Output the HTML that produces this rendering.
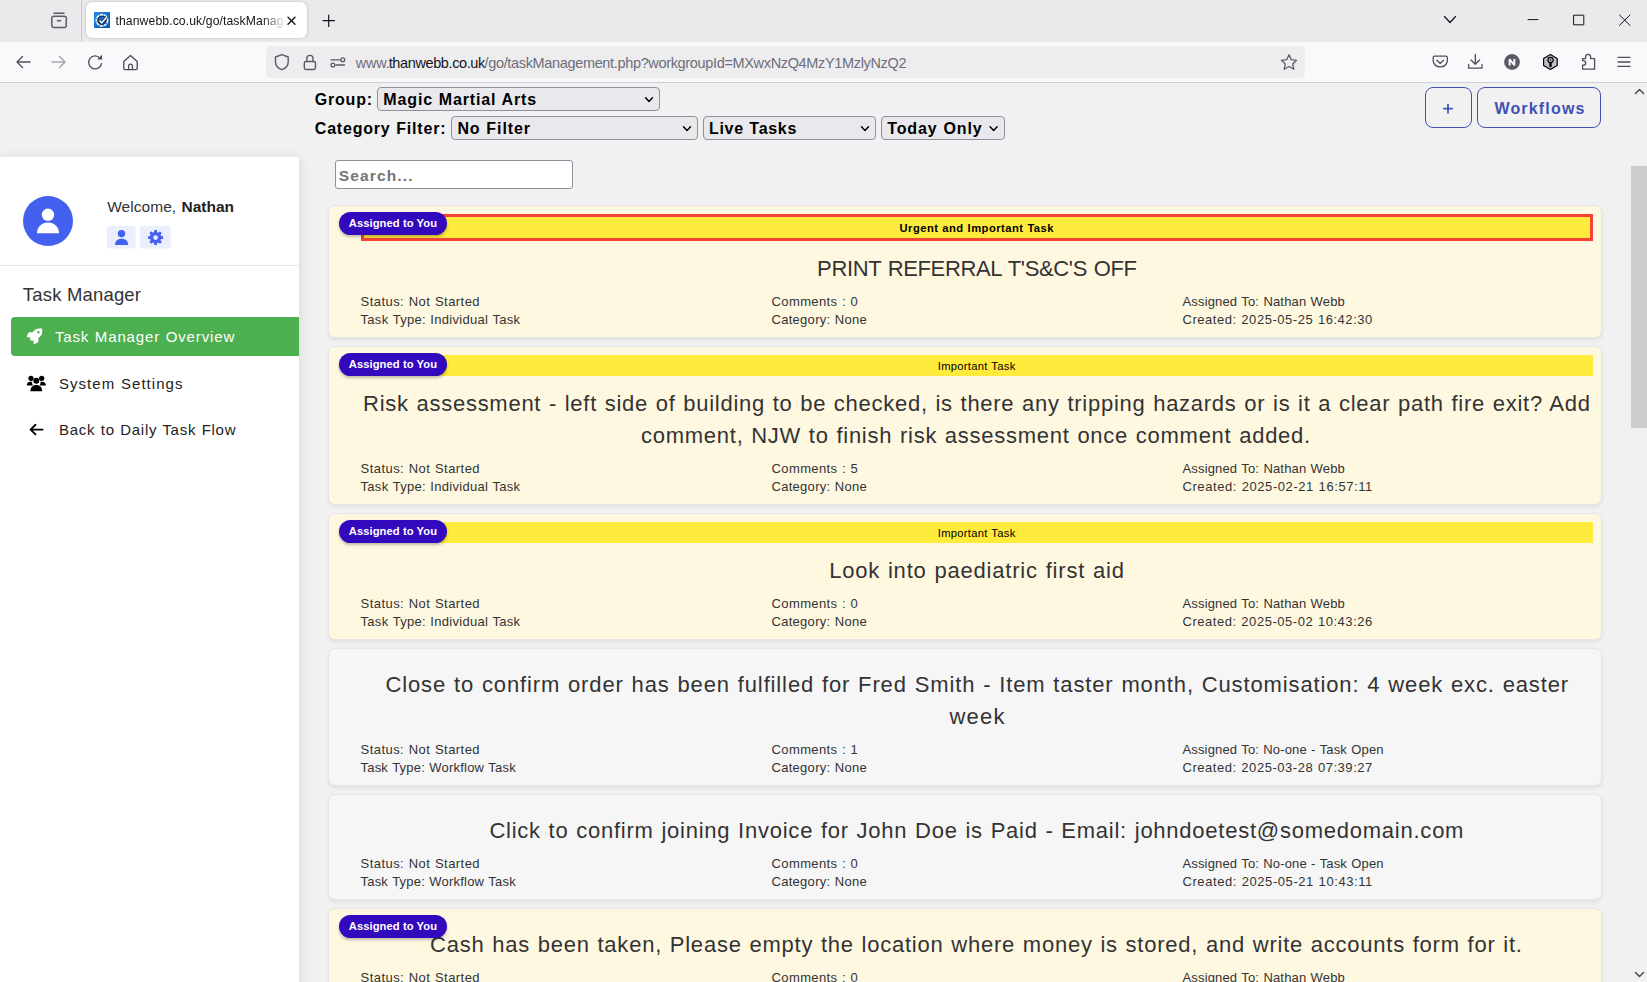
<!DOCTYPE html>
<html><head><meta charset="utf-8">
<style>
*{box-sizing:border-box;margin:0;padding:0}
html,body{width:1647px;height:982px;overflow:hidden;background:#f1f1f1;font-family:"Liberation Sans",sans-serif;position:relative}
.a{position:absolute;white-space:nowrap}
.r{position:absolute}
svg{position:absolute;overflow:visible}
.card{position:absolute;left:328px;width:1274px;border-radius:7px;box-shadow:0 2px 4px rgba(0,0,0,.07);border:1px solid #e5e5e5}
.badge{position:absolute;left:339px;width:108px;height:23px;border-radius:11.5px;background:#3309bd;box-shadow:0 2px 3px rgba(0,0,0,.25);z-index:2}
.banner{position:absolute;left:361px;width:1232px;background:#ffeb3b}
.sel{position:absolute;background:#e9e9ed;border:1px solid #8f8f9d;border-radius:4px}
</style></head><body>
<!-- browser chrome -->
<div class="r" style="left:0;top:0;width:1647px;height:42px;background:#eaeaed"></div>
<div class="r" style="left:81px;top:0;width:1px;height:42px;background:#c9c9cf"></div>
<div class="r" style="left:86px;top:2px;width:221px;height:36px;background:#fff;border-radius:6px;box-shadow:0 0 3px rgba(0,0,0,.22)"></div>
<div class="r" style="left:0;top:42px;width:1647px;height:40px;background:#f9f9fb"></div>
<div class="r" style="left:0;top:82px;width:1647px;height:1px;background:#d0d0d7"></div>
<div class="r" style="left:266px;top:46px;width:1039px;height:32px;background:#ededf0;border-radius:5px"></div>

<!-- tab container icon -->
<svg style="left:0;top:0" width="1647" height="83" viewBox="0 0 1647 83" fill="none" stroke="#5b5b66" stroke-width="1.5" stroke-linecap="round" stroke-linejoin="round">
  <path d="M54 13.2 H64"/>
  <rect x="51.8" y="16.2" width="14.5" height="11.3" rx="2"/>
  <path d="M57.5 20.7 H60.5"/>
  <!-- tab close -->
  <path d="M288 17.2 L295 24.2 M295 17.2 L288 24.2" stroke="#15141a" stroke-width="1.4"/>
  <!-- new tab plus -->
  <path d="M328.7 15 V26.4 M323 20.7 H334.5" stroke="#15141a" stroke-width="1.2"/>
  <!-- tab list chevron -->
  <path d="M1444.5 16.5 L1450 22.5 L1455.5 16.5" stroke="#15141a" stroke-width="1.2"/>
  <!-- window controls -->
  <path d="M1528 19.6 H1538" stroke="#15141a" stroke-width="1"/>
  <rect x="1574" y="15.2" width="9.8" height="9.6" stroke="#15141a" stroke-width="1"/>
  <path d="M1619.5 15 L1630 25.4 M1630 15 L1619.5 25.4" stroke="#15141a" stroke-width="1"/>
  <!-- back -->
  <path d="M30 62 H17 M22.5 56.5 L17 62 L22.5 67.5" stroke="#4f4f5a" stroke-width="1.35"/>
  <!-- forward -->
  <path d="M52 62 H65 M59.5 56.5 L65 62 L59.5 67.5" stroke="#a8a8ad" stroke-width="1.5"/>
  <!-- reload -->
  <path d="M100.2 58.3 A6.5 6.5 0 1 0 101.5 63.6" stroke="#4f4f5a" stroke-width="1.35"/>
  <path d="M97.2 59.4 L102 54.8 L102.2 59.6 Z" fill="#4f4f5a" stroke="none"/>
  <!-- home -->
  <path d="M123.8 61.5 L130.5 55.6 L137.2 61.5 V68.6 A1 1 0 0 1 136.2 69.6 H124.8 A1 1 0 0 1 123.8 68.6 Z" stroke="#4f4f5a" stroke-width="1.35"/>
  <path d="M128.6 69.6 V66 A1.9 1.9 0 0 1 132.4 66 V69.6" stroke="#4f4f5a" stroke-width="1.35"/>
  <!-- shield -->
  <path d="M281.8 54.7 L275.5 57 V62 C275.5 66 278.5 68.5 281.8 69.6 C285.1 68.5 288.2 66 288.2 62 V57 Z" stroke="#5b5b66" stroke-width="1.4"/>
  <!-- lock -->
  <rect x="304.3" y="61.5" width="11.2" height="8" rx="1.7" stroke="#5b5b66" stroke-width="1.4"/>
  <path d="M306.8 61.5 V58.5 A3.1 3.1 0 0 1 313 58.5 V61.5" stroke="#5b5b66" stroke-width="1.4"/>
  <!-- tune -->
  <path d="M331 59.8 H340.5 M336 65 H344.5" stroke="#5b5b66" stroke-width="1.3"/>
  <circle cx="342.8" cy="59.8" r="1.9" stroke="#5b5b66" stroke-width="1.3"/>
  <circle cx="332.9" cy="65" r="1.9" stroke="#5b5b66" stroke-width="1.3"/>
  <!-- star -->
  <path d="M1289 54.8 L1291.3 59.7 L1296.6 60.3 L1292.7 63.9 L1293.8 69.2 L1289 66.5 L1284.2 69.2 L1285.3 63.9 L1281.4 60.3 L1286.7 59.7 Z" stroke="#5b5b66" stroke-width="1.3"/>
  <!-- pocket -->
  <path d="M1434.5 56.2 H1446 A1.3 1.3 0 0 1 1447.3 57.5 V61.5 A7.3 7.3 0 0 1 1433.2 61.5 V57.5 A1.3 1.3 0 0 1 1434.5 56.2 Z" stroke="#4f4f5a" stroke-width="1.3"/>
  <path d="M1436.8 60.2 L1440.2 63.5 L1443.6 60.2" stroke="#4f4f5a" stroke-width="1.3"/>
  <!-- download -->
  <path d="M1475.3 54.5 V64 M1471 60 L1475.3 64.3 L1479.6 60 M1468.6 64.5 V68.2 H1482 V64.5" stroke="#4f4f5a" stroke-width="1.3"/>
  <!-- N circle -->
  <circle cx="1512" cy="62" r="7.9" fill="#5b5b66" stroke="none"/>
  <path d="M1508.7 65.6 V58.9 H1510.7 L1513.4 62.8 V58.9 H1515.3 V65.6 H1513.3 L1510.6 61.7 V65.6 Z" fill="#fff" stroke="none"/>
  <!-- hexagon -->
  <path d="M1550.4 54.6 L1557.2 58.4 V65.6 L1550.4 69.4 L1543.6 65.6 V58.4 Z" fill="#bcc0ca" stroke="#000" stroke-width="1.2"/>
  <circle cx="1550.5" cy="60" r="2.6" fill="#bcc0ca" stroke="#000" stroke-width="1.2"/>
  <circle cx="1550.5" cy="60" r="0.8" fill="#000" stroke="none"/>
  <path d="M1550.5 63.8 V66" stroke="#000" stroke-width="2.4"/>
  <!-- puzzle -->
  <path d="M1582.6 58.6 H1585.6 V56.8 A2.5 2.5 0 0 1 1590.6 56.8 V58.6 H1594.6 V69.2 H1582.6 V65.2 A3.2 2.3 0 0 0 1582.6 60.6 Z" stroke="#4f4f5a" stroke-width="1.3"/>
  <!-- hamburger -->
  <path d="M1618 57.3 H1630 M1618 62 H1630 M1618 66.4 H1630" stroke="#4f4f5a" stroke-width="1.3"/>
</svg>
<!-- favicon -->
<svg style="left:94px;top:12px" width="16" height="16" viewBox="0 0 16 16">
  <defs><linearGradient id="fg" x1="0" y1="0" x2="1" y2="1"><stop offset="0" stop-color="#2a8ae6"/><stop offset="1" stop-color="#0a56b0"/></linearGradient></defs>
  <rect width="16" height="16" fill="url(#fg)"/>
  <circle cx="8" cy="8.3" r="5.6" fill="none" stroke="#e8f2fc" stroke-width="1.8" stroke-dasharray="3.2 0.7"/>
  <circle cx="8" cy="8.3" r="3.9" fill="#1c6fcf" stroke="#14325e" stroke-width="1.4"/>
  <path d="M5.6 8.6 L7.7 10.9 L13.2 4.6" fill="none" stroke="#14325e" stroke-width="3"/>
  <path d="M5.6 8.6 L7.7 10.9 L13.2 4.6" fill="none" stroke="#fff" stroke-width="1.5"/>
</svg>

<!-- page -->
<div class="r" style="left:0;top:157px;width:299px;height:835px;background:#fff;box-shadow:2px 0 10px rgba(0,0,0,.09)"></div>
<div class="r" style="left:0;top:265px;width:299px;height:1px;background:#e6e6e6"></div>
<div class="r" style="left:11px;top:317px;width:288px;height:39px;background:#4caf50;border-radius:4px 0 0 4px"></div>
<!-- avatar -->
<svg style="left:0;top:0" width="300" height="460" viewBox="0 0 300 460">
  <circle cx="48" cy="221" r="25" fill="#4361ee"/>
  <circle cx="48" cy="214.8" r="6.2" fill="#fff"/>
  <path d="M37 233.2 C37 226.8 42 222.6 48 222.6 C54 222.6 59 226.8 59 233.2 Z" fill="#fff"/>
  <rect x="107" y="226" width="28.7" height="22.6" rx="3" fill="#ebeefd"/>
  <rect x="140" y="226" width="30.8" height="22.6" rx="3" fill="#ebeefd"/>
  <circle cx="121.5" cy="233.6" r="3.7" fill="#4361ee"/>
  <path d="M115 245 C115 240.8 117.8 238.8 121.6 238.8 C125.4 238.8 128.2 240.8 128.2 245 Z" fill="#4361ee"/>
  <path fill="#4361ee" fill-rule="evenodd" d="M160.99 236.08 L163.08 236.27 L163.08 238.93 L160.99 239.12 L160.49 240.34 L161.83 241.95 L159.95 243.83 L158.34 242.49 L157.12 242.99 L156.93 245.08 L154.27 245.08 L154.08 242.99 L152.86 242.49 L151.25 243.83 L149.37 241.95 L150.71 240.34 L150.21 239.12 L148.12 238.93 L148.12 236.27 L150.21 236.08 L150.71 234.86 L149.37 233.25 L151.25 231.37 L152.86 232.71 L154.08 232.21 L154.27 230.12 L156.93 230.12 L157.12 232.21 L158.34 232.71 L159.95 231.37 L161.83 233.25 L160.49 234.86 Z M158.00 237.60 A2.4 2.4 0 1 0 153.20 237.60 A2.4 2.4 0 1 0 158.00 237.60 Z"/>
  <!-- rocket -->
  <g transform="translate(26.7 328.4) scale(0.0305)" fill="#fff">
    <path d="M505.12 19.09c-1.19-5.53-6.66-11-12.21-12.19C460.72 0 435.51 0 410.41 0 307.18 0 245.27 55.2 199.05 128H94.84c-16.35.02-35.56 11.88-42.89 26.48L2.52 253.3A28.4 28.4 0 0 0 0 264a24.01 24.01 0 0 0 24.01 24h103.81l-22.47 22.47c-11.37 11.36-13 32.26 0 45.25l50.9 50.91c11.16 11.19 32.16 13.16 45.28 0l22.47-22.47V488a24.01 24.01 0 0 0 24.01 24 28.56 28.56 0 0 0 10.71-2.52l98.73-49.39c14.63-7.3 26.51-26.5 26.51-42.86V312.8c72.6-46.31 128.03-108.41 128.03-211.09.1-25.2.1-50.41-6.86-82.62zM384.04 168a40 40 0 1 1 40.01-40 40.02 40.02 0 0 1-40.01 40z" fill-rule="evenodd"/>
    
  </g>
  <!-- users -->
  <g transform="translate(26.7 375.7)" fill="#000">
    <circle cx="4.3" cy="2.6" r="2.6"/><circle cx="15" cy="2.6" r="2.6"/>
    <circle cx="9.6" cy="5" r="3"/>
    <path d="M0 9.8 C0 7.4 1.6 6 3.6 6 L5.6 6 C5 7 5.6 8.5 6.3 9.8 Z"/>
    <path d="M19.2 9.8 C19.2 7.4 17.6 6 15.6 6 L13.6 6 C14.2 7 13.6 8.5 12.9 9.8 Z"/>
    <path d="M3.7 15.5 C3.7 11.8 6 9.3 9.6 9.3 C13.2 9.3 15.5 11.8 15.5 15.5 Z"/>
  </g>
  <!-- arrow left -->
  <path d="M42.6 429.6 H31 M35.5 424.8 L30.6 429.6 L35.5 434.4" fill="none" stroke="#000" stroke-width="1.9" stroke-linecap="round" stroke-linejoin="round"/>
</svg>

<!-- filters -->
<div class="sel" style="left:377px;top:87px;width:283px;height:24px"></div>
<div class="sel" style="left:451px;top:116px;width:247px;height:24px"></div>
<div class="sel" style="left:703px;top:116px;width:173px;height:24px"></div>
<div class="sel" style="left:881px;top:116px;width:124px;height:24px"></div>
<svg style="left:0;top:0" width="1647" height="200" viewBox="0 0 1647 200" fill="none" stroke="#000" stroke-width="1.5" stroke-linecap="round" stroke-linejoin="round">
  <path d="M645.6 97.7 L649 101.4 L652.4 97.7"/>
  <path d="M683.5 126.7 L687 130.4 L690.5 126.7"/>
  <path d="M861.5 126.7 L865 130.4 L868.5 126.7"/>
  <path d="M990.1 126.7 L993.6 130.4 L997.1 126.7"/>
  <path d="M1448 103.9 V113.4 M1443.2 108.65 H1452.8" stroke="#3f51b5" stroke-width="1.7" stroke-linecap="butt"/>
  <!-- scrollbar arrows -->
  <path d="M1635.5 93.5 L1639.5 89.5 L1643.5 93.5" stroke="#505050" stroke-width="1.6"/>
  <path d="M1635.5 972.5 L1639.5 976.5 L1643.5 972.5" stroke="#505050" stroke-width="1.6"/>
</svg>
<div class="r" style="left:1425px;top:87px;width:47px;height:41px;border:1.5px solid #3f51b5;border-radius:8px"></div>
<div class="r" style="left:1477px;top:87px;width:124px;height:41px;border:1.5px solid #3f51b5;border-radius:8px"></div>
<div class="r" style="left:335px;top:160px;width:238px;height:29px;background:#fff;border:1.5px solid #8f8f9d;border-radius:3px"></div>
<!-- scrollbar thumb -->
<div class="r" style="left:1631px;top:166px;width:16px;height:262px;background:#cdcdcd"></div>

<div class="card" style="top:205px;height:133px;background:#fff8e1"></div>
<div class="badge" style="top:212px"></div>
<div class="banner" style="top:214px;height:27px;border:3px solid #f44336"></div>
<div class="card" style="top:346px;height:159px;background:#fff8e1"></div>
<div class="badge" style="top:353px"></div>
<div class="banner" style="top:355px;height:21px"></div>
<div class="card" style="top:513px;height:127px;background:#fff8e1"></div>
<div class="badge" style="top:520px"></div>
<div class="banner" style="top:522px;height:21px"></div>
<div class="card" style="top:648px;height:138px;background:#f6f6f6"></div>
<div class="card" style="top:794px;height:106px;background:#f6f6f6"></div>
<div class="card" style="top:908px;height:130px;background:#fff8e1"></div>
<div class="badge" style="top:915px"></div>
<span class="a" id="tabt" style="left:115.50px;top:14.97px;font-size:12.2px;line-height:12.2px;color:#15141a;letter-spacing:-0.533px;letter-spacing:0.1px;width:170px;padding-bottom:4px;overflow:hidden;-webkit-mask-image:linear-gradient(to right,#000 86%,transparent 100%);mask-image:linear-gradient(to right,#000 86%,transparent 100%)">thanwebb.co.uk/go/taskManage</span>
<span class="a" id="url1" style="left:355.70px;top:55.53px;font-size:14.5px;line-height:14.5px;color:#6e6e78;letter-spacing:-0.219px;">www.</span>
<span class="a" id="url2" style="left:388.70px;top:55.53px;font-size:14.5px;line-height:14.5px;color:#15141a;letter-spacing:-0.383px;">thanwebb.co.uk</span>
<span class="a" id="url3" style="left:484.50px;top:55.53px;font-size:14.5px;line-height:14.5px;color:#6e6e78;letter-spacing:-0.341px;">/go/taskManagement.php?workgroupId=MXwxNzQ4MzY1MzlyNzQ2</span>
<span class="a" id="grp" style="left:314.80px;top:91.86px;font-size:16px;line-height:16px;color:#000;font-weight:700;letter-spacing:0.793px;word-spacing:0.480px;">Group:</span>
<span class="a" id="grpv" style="left:383.30px;top:91.86px;font-size:16px;line-height:16px;color:#000;font-weight:700;letter-spacing:0.860px;word-spacing:0.480px;">Magic Martial Arts</span>
<span class="a" id="cat" style="left:314.80px;top:121.16px;font-size:16px;line-height:16px;color:#000;font-weight:700;letter-spacing:0.798px;word-spacing:0.480px;">Category Filter:</span>
<span class="a" id="catv" style="left:457.40px;top:121.16px;font-size:16px;line-height:16px;color:#000;font-weight:700;letter-spacing:0.903px;word-spacing:0.480px;">No Filter</span>
<span class="a" id="live" style="left:709.00px;top:121.16px;font-size:16px;line-height:16px;color:#000;font-weight:700;letter-spacing:0.686px;word-spacing:0.480px;">Live Tasks</span>
<span class="a" id="today" style="left:887.20px;top:121.16px;font-size:16px;line-height:16px;color:#000;font-weight:700;letter-spacing:0.898px;word-spacing:0.480px;">Today Only</span>
<span class="a" id="wf" style="left:1494.40px;top:100.56px;font-size:16px;line-height:16px;color:#3f51b5;font-weight:700;letter-spacing:1.187px;word-spacing:0.480px;">Workflows</span>
<span class="a" id="srch" style="left:338.70px;top:167.68px;font-size:15.5px;line-height:15.5px;color:#757575;font-weight:700;letter-spacing:1.158px;word-spacing:0.465px;">Search...</span>
<span class="a" id="wel" style="left:107.20px;top:198.68px;font-size:15.5px;line-height:15.5px;color:#333;letter-spacing:0.053px;">Welcome,</span>
<span class="a" id="nat" style="left:181.50px;top:198.68px;font-size:15.5px;line-height:15.5px;color:#222;font-weight:700;letter-spacing:-0.007px;">Nathan</span>
<span class="a" id="tm" style="left:22.80px;top:286.34px;font-size:18.5px;line-height:18.5px;color:#333;letter-spacing:0.181px;">Task Manager</span>
<span class="a" id="nav1" style="left:54.90px;top:329.30px;font-size:15px;line-height:15px;color:#fff;letter-spacing:0.864px;word-spacing:0.600px;">Task Manager Overview</span>
<span class="a" id="nav2" style="left:59.00px;top:376.00px;font-size:15px;line-height:15px;color:#222;letter-spacing:1.029px;word-spacing:0.600px;">System Settings</span>
<span class="a" id="nav3" style="left:59.00px;top:422.00px;font-size:15px;line-height:15px;color:#222;letter-spacing:0.726px;word-spacing:0.600px;">Back to Daily Task Flow</span>
<span class="a" id="b0" style="left:899.50px;top:222.82px;font-size:11.2px;line-height:11.2px;color:#000;font-weight:700;letter-spacing:0.478px;word-spacing:0.336px;">Urgent and Important Task</span>
<span class="a" id="c0l0" style="left:817.10px;top:258.08px;font-size:22px;line-height:22px;color:#333;letter-spacing:-0.343px;word-spacing:0.880px;">PRINT REFERRAL T'S&amp;C'S OFF</span>
<span class="a" id="m0_0" style="left:360.50px;top:295.30px;font-size:13px;line-height:13px;color:#333;letter-spacing:0.457px;word-spacing:0.520px;">Status: Not Started</span>
<span class="a" id="m0_1" style="left:360.50px;top:313.30px;font-size:13px;line-height:13px;color:#333;letter-spacing:0.300px;word-spacing:0.520px;">Task Type: Individual Task</span>
<span class="a" id="m0_2" style="left:771.50px;top:295.30px;font-size:13px;line-height:13px;color:#333;letter-spacing:0.394px;word-spacing:0.520px;">Comments : 0</span>
<span class="a" id="m0_3" style="left:771.50px;top:313.30px;font-size:13px;line-height:13px;color:#333;letter-spacing:0.286px;word-spacing:0.520px;">Category: None</span>
<span class="a" id="m0_4" style="left:1182.50px;top:295.30px;font-size:13px;line-height:13px;color:#333;letter-spacing:0.160px;word-spacing:0.520px;">Assigned To: Nathan Webb</span>
<span class="a" id="m0_5" style="left:1182.50px;top:313.30px;font-size:13px;line-height:13px;color:#333;letter-spacing:0.539px;word-spacing:0.520px;">Created: 2025-05-25 16:42:30</span>
<span class="a" id="b1" style="left:937.75px;top:360.72px;font-size:11.2px;line-height:11.2px;color:#000;letter-spacing:0.299px;word-spacing:0.448px;">Important Task</span>
<span class="a" id="c1l0" style="left:363.10px;top:393.08px;font-size:22px;line-height:22px;color:#333;letter-spacing:0.731px;word-spacing:0.880px;">Risk assessment - left side of building to be checked, is there any tripping hazards or is it a clear path fire exit? Add</span>
<span class="a" id="c1l1" style="left:641.00px;top:424.58px;font-size:22px;line-height:22px;color:#333;letter-spacing:0.741px;word-spacing:0.880px;">comment, NJW to finish risk assessment once comment added.</span>
<span class="a" id="m1_0" style="left:360.50px;top:461.80px;font-size:13px;line-height:13px;color:#333;letter-spacing:0.457px;word-spacing:0.520px;">Status: Not Started</span>
<span class="a" id="m1_1" style="left:360.50px;top:479.80px;font-size:13px;line-height:13px;color:#333;letter-spacing:0.300px;word-spacing:0.520px;">Task Type: Individual Task</span>
<span class="a" id="m1_2" style="left:771.50px;top:461.80px;font-size:13px;line-height:13px;color:#333;letter-spacing:0.394px;word-spacing:0.520px;">Comments : 5</span>
<span class="a" id="m1_3" style="left:771.50px;top:479.80px;font-size:13px;line-height:13px;color:#333;letter-spacing:0.286px;word-spacing:0.520px;">Category: None</span>
<span class="a" id="m1_4" style="left:1182.50px;top:461.80px;font-size:13px;line-height:13px;color:#333;letter-spacing:0.160px;word-spacing:0.520px;">Assigned To: Nathan Webb</span>
<span class="a" id="m1_5" style="left:1182.50px;top:479.80px;font-size:13px;line-height:13px;color:#333;letter-spacing:0.575px;word-spacing:0.520px;">Created: 2025-02-21 16:57:11</span>
<span class="a" id="b2" style="left:937.75px;top:527.72px;font-size:11.2px;line-height:11.2px;color:#000;letter-spacing:0.299px;word-spacing:0.448px;">Important Task</span>
<span class="a" id="c2l0" style="left:829.20px;top:560.08px;font-size:22px;line-height:22px;color:#333;letter-spacing:0.806px;word-spacing:0.880px;">Look into paediatric first aid</span>
<span class="a" id="m2_0" style="left:360.50px;top:597.30px;font-size:13px;line-height:13px;color:#333;letter-spacing:0.457px;word-spacing:0.520px;">Status: Not Started</span>
<span class="a" id="m2_1" style="left:360.50px;top:615.30px;font-size:13px;line-height:13px;color:#333;letter-spacing:0.300px;word-spacing:0.520px;">Task Type: Individual Task</span>
<span class="a" id="m2_2" style="left:771.50px;top:597.30px;font-size:13px;line-height:13px;color:#333;letter-spacing:0.394px;word-spacing:0.520px;">Comments : 0</span>
<span class="a" id="m2_3" style="left:771.50px;top:615.30px;font-size:13px;line-height:13px;color:#333;letter-spacing:0.286px;word-spacing:0.520px;">Category: None</span>
<span class="a" id="m2_4" style="left:1182.50px;top:597.30px;font-size:13px;line-height:13px;color:#333;letter-spacing:0.160px;word-spacing:0.520px;">Assigned To: Nathan Webb</span>
<span class="a" id="m2_5" style="left:1182.50px;top:615.30px;font-size:13px;line-height:13px;color:#333;letter-spacing:0.539px;word-spacing:0.520px;">Created: 2025-05-02 10:43:26</span>
<span class="a" id="c3l0" style="left:385.50px;top:674.08px;font-size:22px;line-height:22px;color:#333;letter-spacing:0.870px;word-spacing:0.880px;">Close to confirm order has been fulfilled for Fred Smith - Item taster month, Customisation: 4 week exc. easter</span>
<span class="a" id="c3l1" style="left:949.50px;top:705.58px;font-size:22px;line-height:22px;color:#333;letter-spacing:1.212px;word-spacing:0.880px;">week</span>
<span class="a" id="m3_0" style="left:360.50px;top:742.80px;font-size:13px;line-height:13px;color:#333;letter-spacing:0.457px;word-spacing:0.520px;">Status: Not Started</span>
<span class="a" id="m3_1" style="left:360.50px;top:760.80px;font-size:13px;line-height:13px;color:#333;letter-spacing:0.208px;word-spacing:0.520px;">Task Type: Workflow Task</span>
<span class="a" id="m3_2" style="left:771.50px;top:742.80px;font-size:13px;line-height:13px;color:#333;letter-spacing:0.394px;word-spacing:0.520px;">Comments : 1</span>
<span class="a" id="m3_3" style="left:771.50px;top:760.80px;font-size:13px;line-height:13px;color:#333;letter-spacing:0.286px;word-spacing:0.520px;">Category: None</span>
<span class="a" id="m3_4" style="left:1182.50px;top:742.80px;font-size:13px;line-height:13px;color:#333;letter-spacing:0.150px;word-spacing:0.520px;">Assigned To: No-one - Task Open</span>
<span class="a" id="m3_5" style="left:1182.50px;top:760.80px;font-size:13px;line-height:13px;color:#333;letter-spacing:0.539px;word-spacing:0.520px;">Created: 2025-03-28 07:39:27</span>
<span class="a" id="c4l0" style="left:489.40px;top:820.08px;font-size:22px;line-height:22px;color:#333;letter-spacing:0.760px;word-spacing:0.880px;">Click to confirm joining Invoice for John Doe is Paid - Email: johndoetest@somedomain.com</span>
<span class="a" id="m4_0" style="left:360.50px;top:857.30px;font-size:13px;line-height:13px;color:#333;letter-spacing:0.457px;word-spacing:0.520px;">Status: Not Started</span>
<span class="a" id="m4_1" style="left:360.50px;top:875.30px;font-size:13px;line-height:13px;color:#333;letter-spacing:0.208px;word-spacing:0.520px;">Task Type: Workflow Task</span>
<span class="a" id="m4_2" style="left:771.50px;top:857.30px;font-size:13px;line-height:13px;color:#333;letter-spacing:0.394px;word-spacing:0.520px;">Comments : 0</span>
<span class="a" id="m4_3" style="left:771.50px;top:875.30px;font-size:13px;line-height:13px;color:#333;letter-spacing:0.286px;word-spacing:0.520px;">Category: None</span>
<span class="a" id="m4_4" style="left:1182.50px;top:857.30px;font-size:13px;line-height:13px;color:#333;letter-spacing:0.150px;word-spacing:0.520px;">Assigned To: No-one - Task Open</span>
<span class="a" id="m4_5" style="left:1182.50px;top:875.30px;font-size:13px;line-height:13px;color:#333;letter-spacing:0.575px;word-spacing:0.520px;">Created: 2025-05-21 10:43:11</span>
<span class="a" id="c5l0" style="left:430.00px;top:934.08px;font-size:22px;line-height:22px;color:#333;letter-spacing:0.767px;word-spacing:0.880px;">Cash has been taken, Please empty the location where money is stored, and write accounts form for it.</span>
<span class="a" id="m5_0" style="left:360.50px;top:971.30px;font-size:13px;line-height:13px;color:#333;letter-spacing:0.457px;word-spacing:0.520px;">Status: Not Started</span>
<span class="a" id="m5_2" style="left:771.50px;top:971.30px;font-size:13px;line-height:13px;color:#333;letter-spacing:0.394px;word-spacing:0.520px;">Comments : 0</span>
<span class="a" id="m5_4" style="left:1182.50px;top:971.30px;font-size:13px;line-height:13px;color:#333;letter-spacing:0.160px;word-spacing:0.520px;">Assigned To: Nathan Webb</span>
<span class="a" id="bd0" style="left:348.80px;top:217.52px;font-size:11.2px;line-height:11.2px;color:#fff;font-weight:700;letter-spacing:0.070px;z-index:3">Assigned to You</span>
<span class="a" id="bd1" style="left:348.80px;top:358.52px;font-size:11.2px;line-height:11.2px;color:#fff;font-weight:700;letter-spacing:0.070px;z-index:3">Assigned to You</span>
<span class="a" id="bd2" style="left:348.80px;top:525.52px;font-size:11.2px;line-height:11.2px;color:#fff;font-weight:700;letter-spacing:0.070px;z-index:3">Assigned to You</span>
<span class="a" id="bd5" style="left:348.80px;top:920.52px;font-size:11.2px;line-height:11.2px;color:#fff;font-weight:700;letter-spacing:0.070px;z-index:3">Assigned to You</span>
</body></html>
